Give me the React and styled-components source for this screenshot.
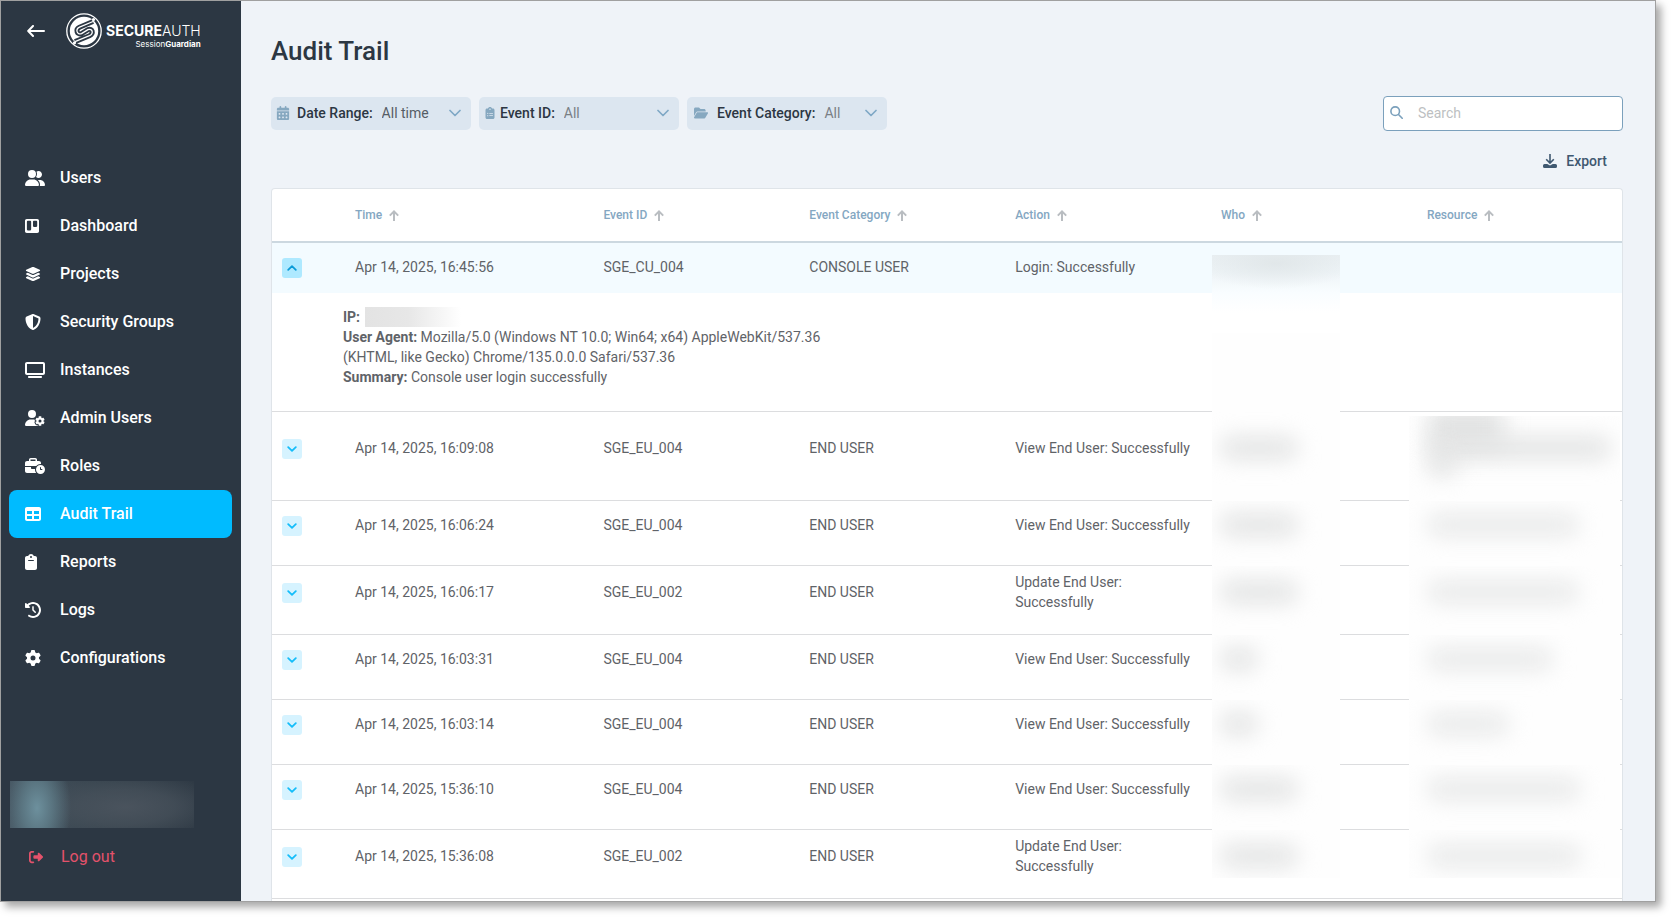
import React from "react";
import styled, { createGlobalStyle, css } from "styled-components";
import {
  FaUserGroup, FaTrello, FaLayerGroup, FaShieldHalved, FaTv, FaUserGear,
  FaBusinessTime, FaTable, FaClipboard, FaClockRotateLeft, FaGear,
  FaRightFromBracket, FaCalendarDays, FaClipboardList, FaFolderOpen,
} from "react-icons/fa6";

const GlobalStyle = createGlobalStyle`
  *, *::before, *::after { box-sizing: border-box; }
  body {
    margin: 0;
    padding: 0 15px 15px 0;
    background: #fff;
    color: #5f6368;
    font: 400 14px/20px Roboto, "Liberation Sans", sans-serif;
  }
  button, input, select { font: inherit; color: inherit; }
  button { border: 0; padding: 0; background: none; cursor: pointer; }
  svg { display: block; flex: none; }
`;

const Frame = styled.div`
  display: flex;
  min-height: calc(100vh - 15px);
  border: 1px solid #a0a0a0;
  background: #eff3f8;
  box-shadow: 5px 5px 8px rgba(0, 0, 0, 0.35);
`;

const Sidebar = styled.aside`
  flex: none;
  display: flex;
  flex-direction: column;
  width: 240px;
  padding: 8px 9px 8px 8px;
  background: #2c3743;
  color: #fff;
`;

const Brand = styled.header`
  display: flex;
  align-items: center;
  height: 44px;
  padding-left: 18px;
`;

const BackButton = styled.button`
  margin-right: 21px;
`;

const Wordmark = styled.div`
  margin-left: 4px;
  padding-top: 12px;
  font-family: Inter, "Liberation Sans", sans-serif;
  font-size: 14px;
  line-height: 14px;
  font-weight: 300;
  text-align: right;
  white-space: nowrap;

  b { font-weight: 700; }
  small {
    display: block;
    font-size: 8px;
    line-height: 12px;
    font-weight: 400;
  }
`;

const Nav = styled.nav`
  display: flex;
  flex-direction: column;
  margin-top: 101px;
`;

const NavLink = styled.a`
  display: flex;
  align-items: center;
  height: 48px;
  padding-left: 16px;
  border-radius: 8px;
  background: ${(p) => (p.$active ? "#00bbff" : "transparent")};
  color: #fff;
  font-size: 16px;
  font-weight: 500;
  text-decoration: none;
`;

const NavIcon = styled.span`
  width: 35px;

  svg {
    width: ${(p) => p.$w}px;
    height: 16px;
  }
`;

const Account = styled.div`
  width: 184px;
  height: 47px;
  margin-top: auto;
  margin-left: 1px;
  background:
    radial-gradient(ellipse 34px 60px at 27px 27px, #6d909d 0%, rgba(96, 126, 138, 0.8) 45%, rgba(70, 90, 100, 0) 100%),
    radial-gradient(ellipse 100px 34px at 115px 26px, rgba(76, 85, 95, 0.9) 0%, rgba(72, 82, 92, 0.7) 50%, rgba(60, 72, 82, 0) 100%),
    linear-gradient(90deg, #43515d, #36434d 50%, #2f3a45);
`;

const LogOut = styled.button`
  display: flex;
  align-items: center;
  gap: 18px;
  height: 24px;
  margin: 17px 0 24px 20px;
  color: #e4526b;
  font-size: 16px;
`;

const Main = styled.main`
  flex: 1;
  min-width: 0;
  display: flex;
  flex-direction: column;
  padding: 32px 32px 0 30px;
`;

const Title = styled.h1`
  margin: 0;
  color: #2c3743;
  font-size: 26px;
  line-height: 36px;
  font-weight: 500;
`;

const Toolbar = styled.div`
  display: flex;
  align-items: center;
  gap: 8px;
  margin-top: 27px;
`;

const Filter = styled.label`
  position: relative;
  display: flex;
  align-items: center;
  width: 200px;
  height: 33px;
  padding: 0 8px 2px 5px;
  border-radius: 5px;
  background: #dce6f0;
  color: #2c3743;
  font-weight: 500;

  > svg { position: absolute; right: 10px; pointer-events: none; }
`;

const FilterIcon = styled.span`
  display: flex;
  justify-content: center;
  width: ${(p) => p.$w}px;
  color: #86a8c0;
`;

const FilterName = styled.span`
  margin-left: ${(p) => p.$gap}px;
  white-space: nowrap;
`;

const FilterSelect = styled.select`
  appearance: none;
  flex: 1;
  min-width: 0;
  margin-left: 9px;
  padding: 0;
  border: 0;
  background: transparent;
  color: ${(p) => (p.$dim ? "#7a7f85" : "#555d66")};
  font-weight: 400;
`;

const SearchBox = styled.label`
  display: flex;
  align-items: center;
  gap: 15px;
  width: 240px;
  height: 35px;
  margin-left: auto;
  padding: 0 6px 2px;
  border: 1px solid #7ba0bc;
  border-radius: 4px;
  background: #fff;

  input {
    flex: 1;
    min-width: 0;
    padding: 0;
    border: 0;
    outline: 0;
    background: none;
  }
  input::placeholder { color: #bdbfc2; }
`;

const ExportButton = styled.button`
  display: flex;
  align-items: center;
  align-self: flex-end;
  gap: 9px;
  height: 30px;
  margin: 15px 16px 12px 0;
  color: #3f5870;
  font-weight: 500;
`;

const TableCard = styled.div`
  flex: 1;
  border: 1px solid #dfe4e9;
  border-bottom: 0;
  border-radius: 4px 4px 0 0;
  background: #fff;
`;

const Table = styled.table`
  width: 100%;
  table-layout: fixed;
  border-collapse: separate;
  border-spacing: 0;
`;

const Col = styled.col`
  width: ${(p) => p.$w};
`;

const Th = styled.th`
  height: 54px;
  padding: 0;
  border-bottom: 2px solid #ccd8e0;
  color: #84a7c2;
  font-size: 12px;
  line-height: 16px;
  font-weight: 500;
  text-align: left;
`;

const SortButton = styled.button`
  display: flex;
  align-items: center;
  gap: 7px;
`;

const Td = styled.td`
  position: relative;
  height: 65px;
  padding: 6px 24px 22px 0;
  border-bottom: 1px solid #dcdddf;
  vertical-align: middle;

  ${(p) => p.$open && css`
    height: 50px;
    padding: 6px 24px 8px 0;
    border-bottom: 0;
    background: #f3fbff;
  `}
`;

const DetailCell = styled.td`
  position: relative;
  padding: 14px 0 24px 71px;
  border-bottom: 1px solid #dcdddf;
`;

const Details = styled.div`
  max-width: 490px;

  p { margin: 0; }
  b { font-weight: 700; }
`;

const AddressLine = styled.p`
  display: flex;
  gap: 5px;
`;

const HiddenAddress = styled.span`
  width: 96px;
  height: 20px;
  background: linear-gradient(90deg, #e3e3e3, #e7e7e7 45%, #fff);
`;

const Toggle = styled.button`
  display: grid;
  place-items: center;
  width: 20px;
  height: 20px;
  margin: 2px 0 0 10px;
  border-radius: 3px;
  background: ${(p) => (p.$open ? "#aee9ff" : "#d6f3ff")};
  color: ${(p) => (p.$open ? "#0a9bd8" : "#14bdfa")};
`;

const Cover = styled.span`
  position: absolute;
  top: ${(p) => p.$top || 0}px;
  bottom: ${(p) => (p.$last ? 20 : -1)}px;
  left: ${(p) => (p.$wide ? -18 : -9)}px;
  width: ${(p) => (p.$wide ? 211 : 128)}px;
  overflow: hidden;
  background: #fefefe;
`;

const OpenCover = styled(Cover)`
  top: 12px;
  z-index: 1;
  bottom: -20px;
  background:
    radial-gradient(ellipse 80px 26px at 64px 8px, rgba(224, 230, 232, 0.9), rgba(228, 234, 237, 0)),
    linear-gradient(#e9eff2, #eef4f7 30%, #f9fdff 65%, #fff);
`;

const Smudge = styled.span`
  position: absolute;
  top: ${(p) => p.$y}px;
  left: ${(p) => p.$x}px;
  width: ${(p) => p.$w}px;
  height: ${(p) => p.$h || 22}px;
  border-radius: 8px;
  background: ${(p) => (p.$soft ? "#e8e9e9" : "#e2e3e3")};
  filter: blur(11px);
`;

const Lines = styled.span`
  display: block;
  height: ${(p) => p.$n * 20}px;
`;

const Chevron = ({ up }) => (
  <svg width="10" height="10" viewBox="0 0 10 10" fill="none" stroke="currentColor" strokeWidth="1.8" strokeLinecap="round" strokeLinejoin="round" aria-hidden="true">
    <path d={up ? "M1.200 6.800L5 3.200l3.800 3.600" : "M1.200 3.200L5 6.800l3.800-3.600"} />
  </svg>
);

const FilterChevron = () => (
  <svg width="12" height="12" viewBox="0 0 12 12" fill="none" stroke="#7fa8c6" strokeWidth="1.7" strokeLinecap="round" strokeLinejoin="round" aria-hidden="true">
    <path d="M1 3.5l5 5 5-5" />
  </svg>
);

const SortArrow = () => (
  <svg width="10" height="11" viewBox="0 0 10 11" fill="none" stroke="#b9bdc1" strokeWidth="2" aria-hidden="true">
    <path d="M5 11V1.500M.8 5.600L5 1.400l4.200 4.200" />
  </svg>
);

const BackArrow = () => (
  <svg width="18" height="12" viewBox="0 0 18 12" fill="none" stroke="#fff" strokeWidth="2" strokeLinecap="round" strokeLinejoin="round" aria-hidden="true">
    <path d="M17 6H1.5M6 1L1.2 6 6 11" />
  </svg>
);

const LogoMark = () => (
  <svg width="36" height="36" viewBox="0 0 36 36" aria-hidden="true">
    <circle cx="18" cy="18" r="17.2" fill="none" stroke="#fff" strokeWidth="1.3" />
    <circle cx="18" cy="18" r="14.2" fill="#fff" />
    <g fill="none" strokeLinejoin="round">
      <path d="M27 8.500L13.500 14.200C9 16.500 11 22.200 15.500 20.600L22 16.600C26.500 15 28 20.500 23.500 22.700L9 28.600" stroke="#2c3743" strokeWidth="5" />
      <path d="M27 8.500L13.500 14.200C9 16.500 11 22.200 15.500 20.600L22 16.600C26.500 15 28 20.500 23.500 22.700L9 28.600" stroke="#fff" strokeWidth="1.300" />
    </g>
    <circle cx="27.500" cy="6.500" r="1.600" fill="#fff" />
    <circle cx="8.500" cy="29.800" r="1.600" fill="#fff" />
  </svg>
);

const SearchIcon = () => (
  <svg width="13" height="13" viewBox="0 0 13 13" fill="none" stroke="#7ba0bc" strokeWidth="1.6" strokeLinecap="round" aria-hidden="true">
    <circle cx="5.200" cy="5.200" r="4.300" />
    <path d="M8.500 8.500l3.700 3.700" />
  </svg>
);

const ExportIcon = () => (
  <svg width="14" height="14" viewBox="0 0 14 14" fill="none" stroke="currentColor" aria-hidden="true">
    <path d="M7 0v8.500M3.200 5.200L7 9l3.800-3.800" strokeWidth="1.600" />
    <path d="M1.500 10h2.700L7 11.600 9.800 10h2.700A1.500 1.500 0 0 1 14 11.500v1A1.500 1.500 0 0 1 12.500 14h-11A1.500 1.500 0 0 1 0 12.500v-1A1.500 1.500 0 0 1 1.500 10z" fill="currentColor" stroke="none" />
  </svg>
);

const navItems = [
  ["Users", FaUserGroup, 20],
  ["Dashboard", FaTrello, 14],
  ["Projects", FaLayerGroup, 16],
  ["Security Groups", FaShieldHalved, 16],
  ["Instances", FaTv, 20],
  ["Admin Users", FaUserGear, 20],
  ["Roles", FaBusinessTime, 20],
  ["Audit Trail", FaTable, 16],
  ["Reports", FaClipboard, 12],
  ["Logs", FaClockRotateLeft, 16],
  ["Configurations", FaGear, 16],
];

const columns = ["Time", "Event ID", "Event Category", "Action", "Who", "Resource"];

const view = "View End User: Successfully";
const update = "Update End User: Successfully";
const rows = [
  { time: "16:09:08", id: "SGE_EU_004", action: view, who: 76, resource: 0, lines: 3 },
  { time: "16:06:24", id: "SGE_EU_004", action: view, who: 76, resource: 150 },
  { time: "16:06:17", id: "SGE_EU_002", action: update, who: 76, resource: 150 },
  { time: "16:03:31", id: "SGE_EU_004", action: view, who: 36, resource: 124 },
  { time: "16:03:14", id: "SGE_EU_004", action: view, who: 36, resource: 80 },
  { time: "15:36:10", id: "SGE_EU_004", action: view, who: 76, resource: 152 },
  { time: "15:36:08", id: "SGE_EU_002", action: update, who: 76, resource: 152 },
];

function EventRow({ row, last }) {
  const y = row.lines === 3 ? 25 : row.action === update ? 15 : 13;
  return (
    <tr>
      <Td><Toggle aria-label="Show details"><Chevron /></Toggle></Td>
      <Td>Apr 14, 2025, {row.time}</Td>
      <Td>{row.id}</Td>
      <Td>END USER</Td>
      <Td>{row.action}</Td>
      <Td><Cover $last={last}><Smudge $x={9} $y={y} $w={row.who} /></Cover></Td>
      <Td>
        <Lines $n={row.lines || 1} />
        <Cover $wide $last={last} $top={row.lines ? 4 : 0}>
          {row.lines ? (
            <>
              <Smudge $x={19} $y={-8} $w={76} $h={40} />
              <Smudge $x={19} $y={21} $w={182} />
              <Smudge $x={19} $y={38} $w={28} />
            </>
          ) : (
            <Smudge $soft $x={19} $y={y} $w={row.resource} />
          )}
        </Cover>
      </Td>
    </tr>
  );
}

export default function App() {
  return (
    <>
      <GlobalStyle />
      <Frame>
        <Sidebar>
          <Brand>
            <BackButton aria-label="Back"><BackArrow /></BackButton>
            <LogoMark />
            <Wordmark>
              <b>SECURE</b>AUTH
              <small>Session<b>Guardian</b></small>
            </Wordmark>
          </Brand>
          <Nav>
            {navItems.map(([name, Icon, width]) => (
              <NavLink key={name} href="#" $active={name === "Audit Trail"}>
                <NavIcon $w={width}><Icon /></NavIcon>
                {name}
              </NavLink>
            ))}
          </Nav>
          <Account />
          <LogOut><FaRightFromBracket size={14} />Log out</LogOut>
        </Sidebar>
        <Main>
          <Title>Audit Trail</Title>
          <Toolbar>
            <Filter>
              <FilterIcon $w={14}><FaCalendarDays size={14} /></FilterIcon>
              <FilterName $gap={7}>Date Range:</FilterName>
              <FilterSelect><option>All time</option></FilterSelect>
              <FilterChevron />
            </Filter>
            <Filter>
              <FilterIcon $w={12}><FaClipboardList size={12} /></FilterIcon>
              <FilterName $gap={4}>Event ID:</FilterName>
              <FilterSelect $dim><option>All</option></FilterSelect>
              <FilterChevron />
            </Filter>
            <Filter>
              <FilterIcon $w={18}><FaFolderOpen size={14} /></FilterIcon>
              <FilterName $gap={7}>Event Category:</FilterName>
              <FilterSelect $dim><option>All</option></FilterSelect>
              <FilterChevron />
            </Filter>
            <SearchBox>
              <SearchIcon />
              <input type="search" placeholder="Search" aria-label="Search" />
            </SearchBox>
          </Toolbar>
          <ExportButton><ExportIcon />Export</ExportButton>
          <TableCard>
            <Table>
              <colgroup>
                <Col $w="83px" />
                <Col $w="18.4%" />
                <Col $w="15.25%" />
                <Col $w="15.25%" />
                <Col $w="15.25%" />
                <Col $w="15.25%" />
                <Col $w="auto" />
              </colgroup>
              <thead>
                <tr>
                  <Th />
                  {columns.map((name) => (
                    <Th key={name}><SortButton>{name}<SortArrow /></SortButton></Th>
                  ))}
                </tr>
              </thead>
              <tbody>
                <tr>
                  <Td $open><Toggle $open aria-label="Hide details"><Chevron up /></Toggle></Td>
                  <Td $open>Apr 14, 2025, 16:45:56</Td>
                  <Td $open>SGE_CU_004</Td>
                  <Td $open>CONSOLE USER</Td>
                  <Td $open>Login: Successfully</Td>
                  <Td $open><OpenCover /></Td>
                  <Td $open />
                </tr>
                <tr>
                  <DetailCell colSpan={5}>
                    <Details>
                      <AddressLine><b>IP:</b><HiddenAddress /></AddressLine>
                      <p><b>User Agent:</b> Mozilla/5.0 (Windows NT 10.0; Win64; x64) AppleWebKit/537.36 (KHTML, like Gecko) Chrome/135.0.0.0 Safari/537.36</p>
                      <p><b>Summary:</b> Console user login successfully</p>
                    </Details>
                  </DetailCell>
                  <DetailCell><Cover $top={40} /></DetailCell>
                  <DetailCell />
                </tr>
                {rows.map((row, i) => (
                  <EventRow key={row.time} row={row} last={i === rows.length - 1} />
                ))}
              </tbody>
            </Table>
          </TableCard>
        </Main>
      </Frame>
    </>
  );
}
